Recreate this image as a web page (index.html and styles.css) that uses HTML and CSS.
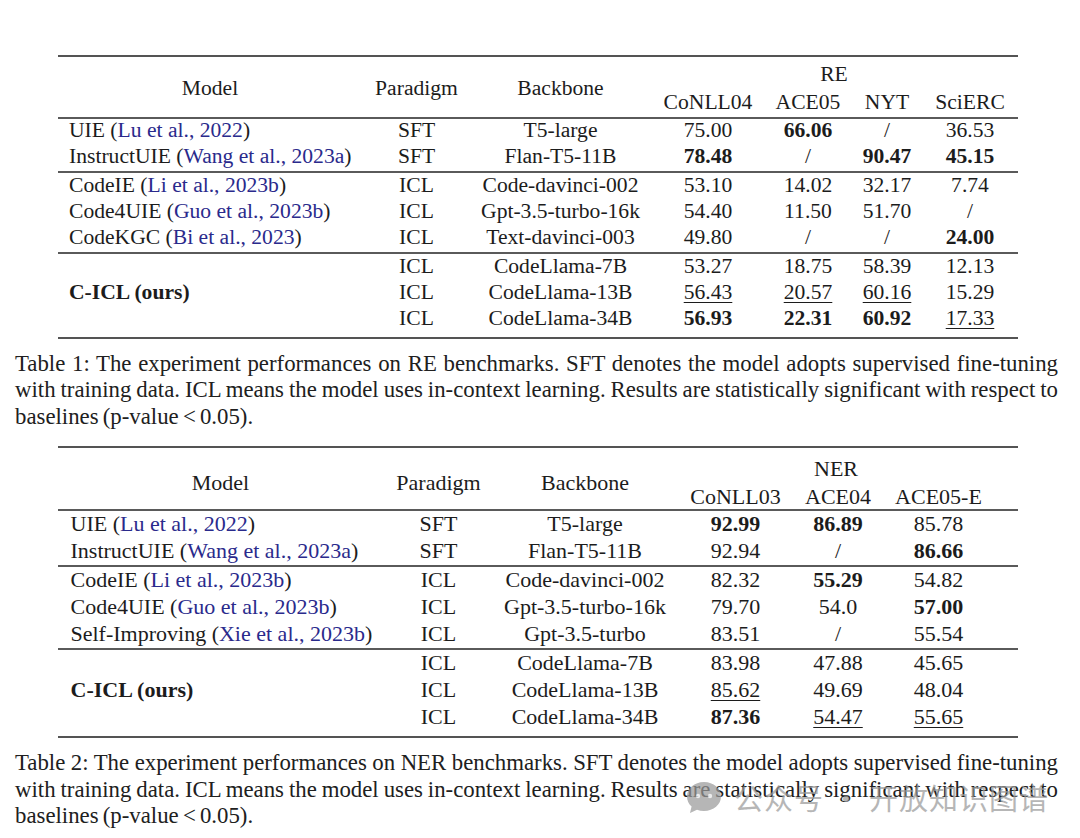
FILE: index.html
```html
<!DOCTYPE html>
<html lang="en">
<head>
<meta charset="utf-8">
<title>C-ICL tables</title>
<link rel="stylesheet" href="styles.css">
</head>
<body>
<div class="page">
  <section class="tbl t1">
    <div class="head">
      <div class="hc c1">Model</div>
      <div class="hc c2">Paradigm</div>
      <div class="hc c3">Backbone</div>
      <div class="gt">RE</div>
      <div class="ds d4">CoNLL04</div>
      <div class="ds d5">ACE05</div>
      <div class="ds d6">NYT</div>
      <div class="ds d7">SciERC</div>
    </div>
    <div class="grp">
      <div class="row"><span class="m">UIE (<a class="cite">Lu et al., 2022</a>)</span><span>SFT</span><span>T5-large</span><span>75.00</span><span class="b">66.06</span><span>/</span><span>36.53</span></div>
      <div class="row"><span class="m">InstructUIE (<a class="cite">Wang et al., 2023a</a>)</span><span>SFT</span><span>Flan-T5-11B</span><span class="b">78.48</span><span>/</span><span class="b">90.47</span><span class="b">45.15</span></div>
    </div>
    <div class="grp">
      <div class="row"><span class="m">CodeIE (<a class="cite">Li et al., 2023b</a>)</span><span>ICL</span><span>Code-davinci-002</span><span>53.10</span><span>14.02</span><span>32.17</span><span>7.74</span></div>
      <div class="row"><span class="m">Code4UIE (<a class="cite">Guo et al., 2023b</a>)</span><span>ICL</span><span>Gpt-3.5-turbo-16k</span><span>54.40</span><span>11.50</span><span>51.70</span><span>/</span></div>
      <div class="row"><span class="m">CodeKGC (<a class="cite">Bi et al., 2023</a>)</span><span>ICL</span><span>Text-davinci-003</span><span>49.80</span><span>/</span><span>/</span><span class="b">24.00</span></div>
    </div>
    <div class="grp">
      <div class="row"><span class="m"></span><span>ICL</span><span>CodeLlama-7B</span><span>53.27</span><span>18.75</span><span>58.39</span><span>12.13</span></div>
      <div class="row"><span class="m b">C-ICL (ours)</span><span>ICL</span><span>CodeLlama-13B</span><span><u>56.43</u></span><span><u>20.57</u></span><span><u>60.16</u></span><span>15.29</span></div>
      <div class="row"><span class="m"></span><span>ICL</span><span>CodeLlama-34B</span><span class="b">56.93</span><span class="b">22.31</span><span class="b">60.92</span><span><u>17.33</u></span></div>
    </div>
  </section>

  <p class="caption cap1">
    <span class="ln">Table 1: The experiment performances on RE benchmarks. SFT denotes the model adopts supervised fine-tuning</span>
    <span class="ln">with training data. ICL means the model uses in-context learning. Results are statistically significant with respect to</span>
    <span class="ln last">baselines (p-value &lt; 0.05).</span>
  </p>

  <section class="tbl t2">
    <div class="head">
      <div class="hc c1">Model</div>
      <div class="hc c2">Paradigm</div>
      <div class="hc c3">Backbone</div>
      <div class="gt">NER</div>
      <div class="ds d4">CoNLL03</div>
      <div class="ds d5">ACE04</div>
      <div class="ds d6">ACE05-E</div>
    </div>
    <div class="grp">
      <div class="row"><span class="m">UIE (<a class="cite">Lu et al., 2022</a>)</span><span>SFT</span><span>T5-large</span><span class="b">92.99</span><span class="b">86.89</span><span>85.78</span></div>
      <div class="row"><span class="m">InstructUIE (<a class="cite">Wang et al., 2023a</a>)</span><span>SFT</span><span>Flan-T5-11B</span><span>92.94</span><span>/</span><span class="b">86.66</span></div>
    </div>
    <div class="grp">
      <div class="row"><span class="m">CodeIE (<a class="cite">Li et al., 2023b</a>)</span><span>ICL</span><span>Code-davinci-002</span><span>82.32</span><span class="b">55.29</span><span>54.82</span></div>
      <div class="row"><span class="m">Code4UIE (<a class="cite">Guo et al., 2023b</a>)</span><span>ICL</span><span>Gpt-3.5-turbo-16k</span><span>79.70</span><span>54.0</span><span class="b">57.00</span></div>
      <div class="row"><span class="m">Self-Improving (<a class="cite">Xie et al., 2023b</a>)</span><span>ICL</span><span>Gpt-3.5-turbo</span><span>83.51</span><span>/</span><span>55.54</span></div>
    </div>
    <div class="grp">
      <div class="row"><span class="m"></span><span>ICL</span><span>CodeLlama-7B</span><span>83.98</span><span>47.88</span><span>45.65</span></div>
      <div class="row"><span class="m b">C-ICL (ours)</span><span>ICL</span><span>CodeLlama-13B</span><span><u>85.62</u></span><span>49.69</span><span>48.04</span></div>
      <div class="row"><span class="m"></span><span>ICL</span><span>CodeLlama-34B</span><span class="b">87.36</span><span><u>54.47</u></span><span><u>55.65</u></span></div>
    </div>
  </section>

  <p class="caption cap2">
    <span class="ln">Table 2: The experiment performances on NER benchmarks. SFT denotes the model adopts supervised fine-tuning</span>
    <span class="ln">with training data. ICL means the model uses in-context learning. Results are statistically significant with respect to</span>
    <span class="ln last">baselines (p-value &lt; 0.05).</span>
  </p>
</div>

<div class="watermark">
  <svg class="wm-logo" width="40" height="36" viewBox="0 0 40 36" aria-hidden="true">
    <path d="M20 3 C29.5 3 37 9.5 37 17.5 C37 25.5 29.5 32 20 32 C17.5 32 15.2 31.6 13 30.8 L6 34 L7.6 27.6 C4.6 25 3 21.4 3 17.5 C3 9.5 10.5 3 20 3 Z" fill="#9a9a9a"/>
    <circle cx="14" cy="17" r="2.2" fill="#e6e6e6"/>
    <circle cx="26" cy="17" r="2.2" fill="#e6e6e6"/>
  </svg>
  <span class="wm-text">公众号 · 开放知识图谱</span>
</div>
</body>
</html>
```

FILE: styles.css
```css
* {
  box-sizing: border-box;
  margin: 0;
  padding: 0;
}

html, body {
  background: #ffffff;
}

body {
  width: 1080px;
  height: 838px;
  overflow: hidden;
  position: relative;
  font-family: "Liberation Serif", "Times New Roman", serif;
  color: #1c1c1c;
}

.page {
  padding-top: 55px;
}

/* ---------- tables ---------- */
.tbl {
  margin-left: 58px;
  width: 960px;
  border-top: 2px solid #545454;
  border-bottom: 2px solid #545454;
}

.t1 {
  font-size: 21.6px;
  --cols: 304px 109px 179px 116px 84px 74px 94px;
  --rh: 26.3px;
}

.t2 {
  font-size: 22px;
  --cols: 325px 111px 182px 119px 86px 137px;
  --rh: 27px;
  margin-top: 16px;
}

.head {
  display: grid;
  grid-template-columns: var(--cols);
  line-height: var(--rh);
  border-bottom: 2px solid #5a5a5a;
  white-space: nowrap;
}

.t1 .head {
  padding-top: 4.35px;
  grid-template-rows: 27.7px 27.65px;
}

.t2 .head {
  padding-top: 7px;
  grid-template-rows: 27.4px 26px;
}

.hc {
  grid-row: 1 / span 2;
  align-self: center;
  text-align: center;
}

.hc.c1 { grid-column: 1; }
.hc.c2 { grid-column: 2; }
.hc.c3 { grid-column: 3; }

.t1 .hc { margin-top: -2px; }

.gt {
  grid-row: 1;
  grid-column: 4 / -1;
  text-align: center;
}

.t2 .gt { padding-right: 22px; }

.ds {
  grid-row: 2;
  text-align: center;
}
.ds.d4 { grid-column: 4; }
.ds.d5 { grid-column: 5; }
.ds.d6 { grid-column: 6; }
.ds.d7 { grid-column: 7; }

.t1 .ds.d7 { padding-right: 2px; }
.t2 .ds.d6 { padding-right: 22px; }

.grp {
  margin-top: -1.5px;
  padding-bottom: 1.5px;
  border-bottom: 2px solid #5a5a5a;
}

.t2 .grp {
  margin-top: -1px;
  padding-bottom: 1.3px;
}

.tbl .grp:last-child {
  border-bottom: none;
  padding-bottom: 5.4px;
}

.t2 .grp:last-child {
  padding-bottom: 5.6px;
}

.row {
  display: grid;
  grid-template-columns: var(--cols);
  height: var(--rh);
  line-height: var(--rh);
  white-space: nowrap;
}

.row > span {
  text-align: center;
}

.row > span.m {
  text-align: left;
}

.t1 .row > span.m,
.t1 .hc.c1 {
  padding-left: 11px;
  padding-right: 11px;
}

.t2 .row > span.m,
.t2 .hc.c1 {
  padding-left: 12.5px;
  padding-right: 12.5px;
}

.t1 .row > span:nth-child(7) { padding-right: 2px; }
.t2 .row > span:nth-child(6) { padding-right: 22px; }

.b {
  font-weight: bold;
}

u {
  text-decoration: underline;
  text-decoration-thickness: 1.4px;
  text-underline-offset: 3px;
}

.cite {
  color: #2a2a8c;
  text-decoration: none;
}

/* ---------- captions ---------- */
.caption {
  margin-left: 15px;
  width: 1043px;
  font-size: 22.8px;
  line-height: 26.5px;
  word-spacing: -1.5px;
  color: #202020;
}

.cap1 { margin-top: 12px; }
.cap2 { margin-top: 12px; }

.caption .ln {
  display: block;
  text-align: justify;
  text-align-last: justify;
}

.caption .ln.last {
  text-align: left;
  text-align-last: left;
}

/* ---------- watermark ---------- */
.watermark {
  position: absolute;
  left: 684px;
  top: 776px;
  display: flex;
  align-items: center;
  gap: 10px;
  opacity: 0.72;
}

.wm-text {
  font-family: "Noto Sans CJK SC", "Noto Sans", sans-serif;
  font-size: 29px;
  color: #9b9b9b;
  letter-spacing: 1px;
}
```
